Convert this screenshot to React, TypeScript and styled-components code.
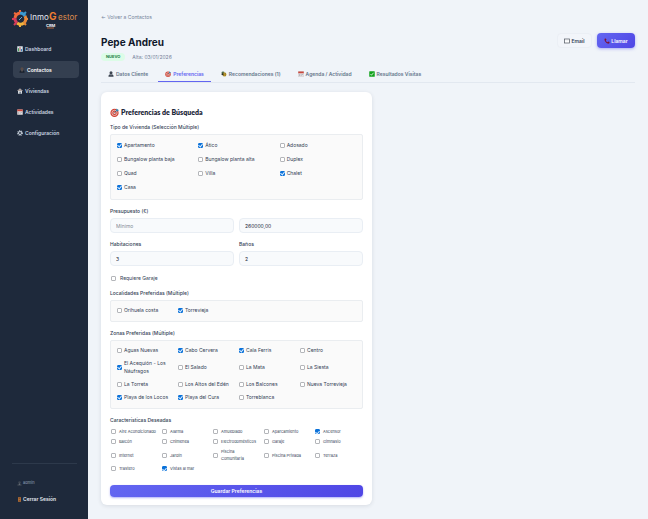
import React, { useId } from "react";
import styled, { createGlobalStyle, css } from "styled-components";

const Global = createGlobalStyle`
  * { box-sizing: border-box; }
  html, body { margin: 0; background: #f0f4f9; }
  body { font-family: Inter, "Liberation Sans", sans-serif; font-size: 5px; line-height: 8px; color: #334155; }
  button, input { font: inherit; color: inherit; }
  button { cursor: pointer; }
  a { color: inherit; text-decoration: none; }
  h1, h2, p { margin: 0; }
`;

const Layout = styled.div`
  display: grid;
  grid-template-columns: 88px 1fr;
  min-height: 100vh;
`;

const Sidebar = styled.aside`
  display: flex;
  flex-direction: column;
  padding: 8px 9px 16px 12px;
  background: #1e293b;
  color: #cbd5e1;
`;

const LogoImage = styled.svg`
  display: block;
  width: 66px;
  height: 22px;
`;

const Nav = styled.nav`
  display: flex;
  flex-direction: column;
  gap: 4px;
  margin-top: 10px;
`;

const NavLink = styled.a<{ $active?: boolean }>`
  display: flex;
  align-items: center;
  gap: 2px;
  height: 17px;
  margin-left: 1px;
  padding-left: ${(p) => (p.$active ? 6 : 4)}px;
  border-radius: 4px;
  font-weight: 600;
  ${(p) => p.$active && css`
    background: #343f50;
    color: #fff;
  `}
`;

const Account = styled.div`
  display: flex;
  flex-direction: column;
  gap: 8px;
  margin: auto 2px 0 0;
  padding: 15px 5px 0;
  border-top: 1px solid #2d394b;
`;

const AccountLine = styled.p`
  display: flex;
  align-items: center;
  gap: 1px;
  font-size: 4px;
  color: #94a3b8;
`;

const Logout = styled.a`
  display: flex;
  align-items: center;
  gap: 1px;
  font-weight: 600;
  color: #e5eaf1;
`;

const Main = styled.main`
  min-width: 0;
  padding: 13px 13px 14px;
`;

const BackLink = styled.a`
  display: block;
  width: fit-content;
  color: #75839a;
`;

const Header = styled.header`
  display: flex;
  justify-content: space-between;
  align-items: flex-start;
  margin-top: 12px;
`;

const Title = styled.h1`
  margin-top: 2px;
  font-size: 10px;
  line-height: 14px;
  font-weight: 700;
  color: #0f172a;
`;

const Meta = styled.div`
  display: flex;
  align-items: center;
  gap: 7px;
  margin-top: 4px;
  color: #75839a;
`;

const Badge = styled.span`
  padding: 0 5px;
  border-radius: 4px;
  background: #dcfce7;
  color: #177c3e;
  font-size: 4px;
  font-weight: 700;
`;

const Actions = styled.div`
  display: flex;
  gap: 5px;
`;

const Action = styled.button<{ $primary?: boolean }>`
  display: flex;
  align-items: center;
  justify-content: center;
  gap: 1px;
  width: ${(p) => (p.$primary ? 38 : 35)}px;
  height: 15px;
  padding: 0;
  border: 1px solid #ebeff5;
  border-radius: 4px;
  background: #f2f5fa;
  font-weight: 600;
  ${(p) => p.$primary && css`
    border: 0;
    background: linear-gradient(135deg, #6366f1, #4f46e5);
    color: #fff;
    box-shadow: 0 1px 3px #6366f180;
  `}
`;

const Tabs = styled.nav`
  display: flex;
  gap: 3px;
  margin-top: 5px;
  border-bottom: 1px solid #e2e8f0;
`;

const Tab = styled.a<{ $active?: boolean }>`
  display: flex;
  align-items: center;
  gap: 2px;
  height: 16px;
  padding: 0 7px;
  border-bottom: 1px solid ${(p) => (p.$active ? "#6366f1" : "transparent")};
  color: ${(p) => (p.$active ? "#6366f1" : "#64748b")};
  font-weight: 600;
  white-space: nowrap;
`;

const Card = styled.form`
  display: flex;
  flex-direction: column;
  max-width: 271px;
  margin-top: 9px;
  padding: 15px 9px 8px;
  border-radius: 6px;
  background: #fff;
  box-shadow: 0 1px 4px #0f172a1c;
`;

const CardTitle = styled.h2`
  display: flex;
  align-items: center;
  gap: 2px;
  margin-bottom: 6px;
  font-family: Lato, "Liberation Sans", sans-serif;
  font-size: 7px;
  line-height: 10px;
  font-weight: 800;
  color: #1e293b;
`;

const Group = styled.div`
  margin-bottom: 7px;
`;

const Caption = styled.label`
  display: block;
  margin-bottom: 3px;
  font-weight: 500;
`;

const Options = styled.div<{ $cols: number; $look: "roomy" | "boxed" | "plain" }>`
  display: grid;
  grid-template-columns: repeat(${(p) => p.$cols}, minmax(0, 1fr));
  align-items: center;
  ${(p) => p.$look === "plain"
    ? css`
        gap: 3px;
        padding: 1px 0 0 1px;
        font-size: 4px;
        line-height: 7px;
      `
    : css`
        gap: ${p.$look === "roomy" ? "6px 5px" : "5px"};
        padding: ${p.$look === "roomy" ? "6px 6px 8px" : "5px 6px 7px"};
        border: 1px solid #eaedf0;
        border-radius: 2px;
        background: #fafafa;
      `}
`;

const Check = styled.label<{ $gap: number }>`
  display: flex;
  align-items: center;
  gap: ${(p) => p.$gap}px;
  white-space: pre;
`;

const Box = styled.input`
  appearance: none;
  display: grid;
  place-content: center;
  flex: none;
  width: 5px;
  height: 5px;
  margin: 0;
  border: 1px solid #b4b6ba;
  border-radius: 1px;
  background: #fff;

  &:checked {
    border-color: #0b72d9;
    background: #0b72d9;
  }

  &:checked::after {
    content: "";
    width: 2px;
    height: 3px;
    border: solid #d9ebff;
    border-width: 0 1px 1px 0;
    transform: rotate(40deg);
  }
`;

const GarageRow = styled.div`
  margin: 1px 0 7px;
  padding-left: 1px;
`;

const Fields = styled.div`
  display: grid;
  grid-template-columns: 1fr 1fr;
  gap: 5px;
  margin-bottom: 7px;
`;

const Input = styled.input`
  display: block;
  width: 100%;
  height: 15px;
  padding: 0 5px;
  border: 1px solid #e9eef4;
  border-radius: 4px;
  background: #f8fafc;
  color: #1e293b;

  &::placeholder {
    color: #858b95;
  }
`;

const Submit = styled.button`
  height: 12px;
  margin-top: 6px;
  padding: 0;
  border: 0;
  border-radius: 4px;
  background: linear-gradient(135deg, #6366f1, #4f46e5);
  color: #fff;
  font-weight: 600;
  box-shadow: 0 1px 2px #6366f180;
`;

const Glyph = styled.svg<{ $size?: number }>`
  flex: none;
  width: ${(p) => p.$size ?? 6}px;
  height: ${(p) => p.$size ?? 6}px;
`;

type IconName =
  | "chart" | "person" | "contact" | "house" | "calendar" | "gear" | "door"
  | "target" | "bee" | "tick" | "phone" | "mail";

const drawings: Record<IconName, React.ReactNode> = {
  chart: (
    <>
      <rect x="1" y="1" width="22" height="22" rx="1" fill="#dce6ec" />
      <path d="M4 9h4v12H4z" fill="#3fa35b" />
      <path d="M10 4h4v17h-4z" fill="#b7625c" />
      <path d="M16 12h4v9h-4z" fill="#3583c6" />
    </>
  ),
  person: (
    <>
      <circle cx="12" cy="7" r="6" fill="#3e4652" />
      <path d="M2 23v-3c0-5 4-7 10-7s10 2 10 7v3z" fill="#3e4652" />
      <path d="M10 13h4l-2 6z" fill="#b4bcc6" />
    </>
  ),
  contact: (
    <>
      <path d="M2 23v-3c0-5 4-7 10-7s10 2 10 7v3z" fill="#18202c" />
      <circle cx="12" cy="7" r="6" fill="#5a4c47" />
      <path d="M10 13h4l-2 7z" fill="#b99f8d" />
    </>
  ),
  house: (
    <>
      <path d="M12 2 1 12h3v11h16V12h3z" fill="#d7dce0" />
      <path d="M12 2 1 12h22z" fill="#a89a97" />
      <path d="M10 15h5v8h-5z" fill="#5c6675" />
    </>
  ),
  calendar: (
    <>
      <rect x="1" y="2" width="22" height="21" rx="2" fill="#e4e1e2" stroke="#b9a5a5" />
      <path d="M1 2h22v7H1z" fill="#c9473c" />
      <path d="M5 12h3v3H5zm6 0h3v3h-3zm6 0h3v3h-3zM5 17h3v3H5zm6 0h3v3h-3z" fill="#98a0ab" />
    </>
  ),
  gear: (
    <>
      <circle cx="12" cy="12" r="9" fill="none" stroke="#c6cfda" strokeWidth="5" strokeDasharray="4 3" />
      <circle cx="12" cy="12" r="6" fill="none" stroke="#c6cfda" strokeWidth="4" />
    </>
  ),
  door: (
    <>
      <path d="M5 1h14v22H5z" fill="#b9743a" />
      <path d="M8 4h8v6H8zm0 9h8v7H8z" fill="#8a5127" />
    </>
  ),
  target: (
    <>
      <circle cx="12" cy="13" r="11" fill="#cf4032" />
      <circle cx="12" cy="13" r="7" fill="none" stroke="#f1dedb" strokeWidth="2" />
      <circle cx="12" cy="13" r="3" fill="#f1dedb" />
      <path d="m11 14 9-10" stroke="#37526b" strokeWidth="2" />
      <path d="m16 8 1-7 3 3 4 1-4 4z" fill="#348bb5" />
    </>
  ),
  bee: (
    <>
      <ellipse cx="8" cy="7" rx="6" ry="5" fill="#4c6b4a" />
      <ellipse cx="14" cy="14" rx="8" ry="8" fill="#e3b32c" />
      <path d="M11 8v13M17 7v14" stroke="#29312c" strokeWidth="2" />
      <circle cx="6" cy="13" r="4" fill="#29312c" />
    </>
  ),
  tick: (
    <>
      <rect x="1" y="1" width="22" height="22" rx="2" fill="#12a31c" />
      <path d="m6 12 4 5 8-10" fill="none" stroke="#fff" strokeWidth="3" />
    </>
  ),
  phone: (
    <path d="M3 3c3-3 6 0 7 4L7 10c1 3 4 6 7 7l3-3c4 1 7 4 4 7-3 4-9 1-13-3S0 7 3 3z" fill="#7d1238" />
  ),
  mail: (
    <>
      <rect x="2" y="4" width="20" height="16" fill="#fff" stroke="#565c66" strokeWidth="3" />
      <path d="m3 6 9 6 9-6" fill="none" stroke="#b8bdc5" strokeWidth="1" />
    </>
  ),
};

function Icon({ name, size }: { name: IconName; size?: number }) {
  return (
    <Glyph viewBox="0 0 24 24" $size={size} aria-hidden="true">
      {drawings[name]}
    </Glyph>
  );
}

function Logo() {
  return (
    <LogoImage viewBox="0 0 66 22" role="img" aria-label="InmoGestor CRM">
      <g fill="none" strokeWidth="3">
        <path d="M3 10A6 6 0 0 1 8 5" stroke="#ef6a3a" />
        <path d="M8 5a6 6 0 0 1 5 3" stroke="#3b9ad1" />
        <path d="M13 8a6 6 0 0 1-1 7" stroke="#e8893a" />
        <path d="M12 15a6 6 0 0 1-7 0" stroke="#f2b33d" />
        <path d="M5 15a6 6 0 0 1-2-5" stroke="#d43c5c" />
      </g>
      <g strokeWidth="2">
        <path d="M8 4V2M4 6 2 5" stroke="#ef6a3a" />
        <path d="m12 6 2-2" stroke="#3b9ad1" />
        <path d="M14 11h2M12 15l2 2" stroke="#e8893a" />
        <path d="M8 17v2" stroke="#f2b33d" />
        <path d="M2 11H0M4 15l-2 2" stroke="#d43c5c" />
      </g>
      <path d="m7 12 3-3" stroke="#5ba9d8" strokeWidth="1" />
      <text x="18" y="12" fontSize="8" fill="#e6ebf2">Inmo</text>
      <text x="37" y="12" fontSize="10" fontWeight="700" fill="#ee7d31">G</text>
      <text x="46" y="12" fontSize="8" fill="#dd8a4c">estor</text>
      <text x="34" y="19" fontSize="4" fontWeight="700" fill="#f1f5f9">CRM</text>
      <path d="M35 20h7" stroke="#b2663f" strokeWidth="1" />
    </LogoImage>
  );
}

type Option = [label: string, checked?: boolean];

const housing: Option[] = [
  ["Apartamento", true], ["Ático", true], ["Adosado"],
  ["Bungalow planta baja"], ["Bungalow planta alta"], ["Duplex"],
  ["Quad"], ["Villa"], ["Chalet", true], ["Casa", true],
];

const towns: Option[] = [["Orihuela costa"], ["Torrevieja", true]];

const zones: Option[] = [
  ["Aguas Nuevas"], ["Cabo Cervera", true], ["Cala Ferris", true], ["Centro"],
  ["El Acequión - Los\nNáufragos", true], ["El Salado"], ["La Mata"], ["La Siesta"],
  ["La Torreta"], ["Los Altos del Edén"], ["Los Balcones"], ["Nueva Torrevieja"],
  ["Playa de los Locos", true], ["Playa del Cura", true], ["Torreblanca"],
];

const features: Option[] = [
  ["Aire Acondicionado"], ["Alarma"], ["Amueblado"], ["Aparcamiento"], ["Ascensor", true],
  ["Balcón"], ["Chimenea"], ["Electrodomésticos"], ["Garaje"], ["Gimnasio"],
  ["Internet"], ["Jardín"], ["Piscina\nComunitaria"], ["Piscina Privada"], ["Terraza"],
  ["Trastero"], ["Vistas al mar", true],
];

interface CheckGroupProps {
  title: string;
  options: Option[];
  cols: number;
  look: "roomy" | "boxed" | "plain";
}

function CheckGroup({ title, options, cols, look }: CheckGroupProps) {
  const id = useId();
  return (
    <Group role="group" aria-labelledby={id}>
      <Caption as="div" id={id}>{title}</Caption>
      <Options $cols={cols} $look={look}>
        {options.map(([label, checked]) => (
          <Check key={label} $gap={look === "plain" ? 3 : 2}>
            <Box type="checkbox" defaultChecked={checked} />
            {label}
          </Check>
        ))}
      </Options>
    </Group>
  );
}

export default function App() {
  return (
    <>
      <Global />
      <Layout>
        <Sidebar>
          <Logo />
          <Nav aria-label="Principal">
            <NavLink href="#"><Icon name="chart" />Dashboard</NavLink>
            <NavLink href="#" $active aria-current="page"><Icon name="contact" />Contactos</NavLink>
            <NavLink href="#"><Icon name="house" />Viviendas</NavLink>
            <NavLink href="#"><Icon name="calendar" />Actividades</NavLink>
            <NavLink href="#"><Icon name="gear" />Configuración</NavLink>
          </Nav>
          <Account>
            <AccountLine><Icon name="person" size={5} />admin</AccountLine>
            <Logout href="#"><Icon name="door" size={5} />Cerrar Sesión</Logout>
          </Account>
        </Sidebar>
        <Main>
          <BackLink href="#">← Volver a Contactos</BackLink>
          <Header>
            <div>
              <Title>Pepe Andreu</Title>
              <Meta><Badge>NUEVO</Badge>Alta: 03/01/2026</Meta>
            </div>
            <Actions>
              <Action type="button"><Icon name="mail" />Email</Action>
              <Action type="button" $primary><Icon name="phone" />Llamar</Action>
            </Actions>
          </Header>
          <Tabs aria-label="Secciones del contacto">
            <Tab href="#"><Icon name="person" />Datos Cliente</Tab>
            <Tab href="#" $active aria-current="page"><Icon name="target" />Preferencias</Tab>
            <Tab href="#"><Icon name="bee" />Recomendaciones (1)</Tab>
            <Tab href="#"><Icon name="calendar" />Agenda / Actividad</Tab>
            <Tab href="#"><Icon name="tick" />Resultados Visitas</Tab>
          </Tabs>
          <Card>
            <CardTitle><Icon name="target" size={9} />Preferencias de Búsqueda</CardTitle>
            <CheckGroup title="Tipo de Vivienda (Selección Múltiple)" options={housing} cols={3} look="roomy" />
            <Caption htmlFor="min">Presupuesto (€)</Caption>
            <Fields>
              <Input id="min" placeholder="Mínimo" />
              <Input aria-label="Presupuesto máximo" defaultValue="260000,00" />
            </Fields>
            <Fields>
              <div>
                <Caption htmlFor="rooms">Habitaciones</Caption>
                <Input id="rooms" defaultValue="3" />
              </div>
              <div>
                <Caption htmlFor="baths">Baños</Caption>
                <Input id="baths" defaultValue="2" />
              </div>
            </Fields>
            <GarageRow>
              <Check $gap={4}><Box type="checkbox" />Requiere Garaje</Check>
            </GarageRow>
            <CheckGroup title="Localidades Preferidas (Múltiple)" options={towns} cols={4} look="boxed" />
            <CheckGroup title="Zonas Preferidas (Múltiple)" options={zones} cols={4} look="boxed" />
            <CheckGroup title="Características Deseadas" options={features} cols={5} look="plain" />
            <Submit type="button">Guardar Preferencias</Submit>
          </Card>
        </Main>
      </Layout>
    </>
  );
}
